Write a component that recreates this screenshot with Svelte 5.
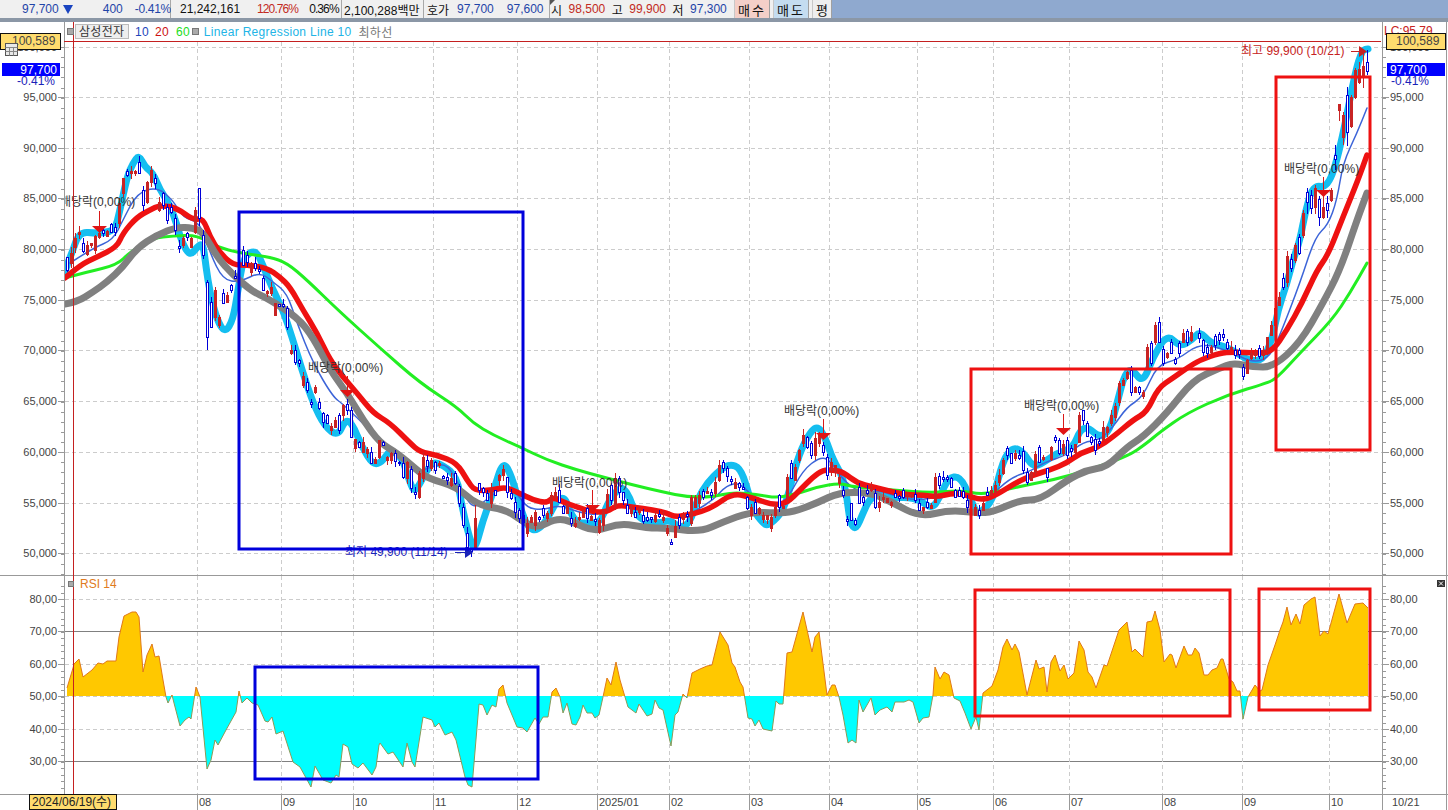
<script>
  const pts = (s) => s.trim().split(/\s+/).map((p) => p.split(',').map(Number));
  const line = (a) => a.map((p) => p.join(',')).join(' ');
  const smooth = (a) => {
    let d = `M${a[0]}`;
    for (let i = 1; i < a.length - 1; i++) {
      d += `Q${a[i]} ${(a[i][0] + a[i + 1][0]) / 2},${(a[i][1] + a[i + 1][1]) / 2}`;
    }
    return `${d}L${a[a.length - 1]}`;
  };

  // traced series, page pixel coordinates
  const cyan = pts(`65,272 67,265 73,250 77,238 83,232 93,233 103,233 115,230 120,210 127,177 133,163 139,155 145,167 153,173 160,190 170,205 177,225 182,243 190,256 197,247 203,243 206,267 210,293 217,320 225,333 233,320 238,290 243,260 250,252 257,252 264,268 273,290 283,310 292,337 302,370 313,403 325,427 338,436 345,420 352,423 362,447 373,465 382,462 390,450 402,457 410,483 415,493 427,470 433,462 443,465 457,477 462,507 470,540 475,550 483,520 493,493 503,460 512,477 520,507 528,528 537,531 547,520 557,500 565,497 570,512 577,523 587,523 600,523 608,503 615,492 623,487 630,498 635,513 645,522 660,523 670,520 680,528 690,523 697,500 707,483 720,470 730,464 740,468 747,487 753,510 763,523 768,526 780,515 787,500 797,460 807,437 817,425 825,437 833,460 842,475 847,497 850,523 856,530 863,513 870,498 883,492 893,498 907,497 920,500 932,509 940,497 948,478 960,476 970,497 977,515 983,510 993,500 1003,460 1013,447 1023,452 1033,467 1043,463 1057,453 1073,448 1080,430 1088,427 1100,438 1110,430 1117,403 1125,373 1132,369 1143,383 1153,357 1167,334 1180,347 1192,340 1200,331 1210,343 1227,347 1240,355 1250,361 1263,360 1272,340 1278,310 1287,283 1293,260 1300,240 1305,213 1313,185 1328,188 1340,150 1355,73 1362,50 1368,49`);
  const blue = pts(`70,263 93,248 113,240 123,220 137,193 157,187 173,200 183,218 200,222 210,253 223,280 240,282 260,272 273,282 287,293 297,323 313,363 333,397 343,404 383,443 400,453 417,473 430,467 447,463 460,487 473,510 490,497 503,487 517,493 527,508 543,510 560,505 580,513 600,515 620,502 640,510 663,513 683,518 697,510 713,500 727,485 740,483 753,497 773,507 787,500 803,470 820,457 830,460 843,480 860,493 880,490 900,498 920,500 937,497 957,493 973,498 990,497 1010,478 1033,470 1043,463 1067,455 1083,442 1100,440 1113,427 1127,407 1143,397 1157,365 1177,360 1200,343 1227,350 1253,363 1270,357 1280,335 1300,283 1315,237 1328,225 1337,200 1343,163 1357,133 1367,108`);
  const red = pts(`65,278 80,265 97,257 117,247 123,233 137,217 150,210 160,205 177,208 193,220 203,218 210,237 220,253 233,265 247,265 267,268 280,277 290,287 303,310 317,333 330,360 343,377 357,393 373,413 390,423 410,443 420,452 437,455 457,463 467,480 475,491 493,490 505,487 517,492 533,500 547,503 553,497 563,502 577,507 593,512 607,512 617,505 633,507 653,510 667,513 675,517 687,515 697,513 713,507 733,493 753,498 773,505 787,503 800,490 813,477 823,470 833,470 843,472 857,483 873,487 893,492 907,495 923,495 937,497 953,493 967,495 980,500 993,497 1017,482 1033,475 1050,470 1067,463 1080,453 1097,448 1113,437 1133,420 1147,412 1158,388 1173,378 1187,368 1200,360 1220,353 1233,352 1257,353 1272,352 1287,330 1302,303 1317,270 1328,255 1343,217 1358,180 1367,155`);
  const gray = pts(`65,304 77,302 93,292 107,282 123,267 137,248 157,235 177,227 193,228 203,232 217,257 233,275 253,292 267,298 297,317 313,337 330,370 347,393 363,420 380,443 397,453 417,470 427,478 457,487 477,505 507,510 523,522 537,528 557,518 573,522 595,532 620,523 647,528 667,528 700,532 723,522 750,512 777,513 793,512 817,503 840,492 873,493 893,503 920,517 950,510 977,513 993,512 1020,500 1040,500 1067,480 1087,470 1107,467 1127,447 1143,437 1167,413 1193,380 1220,368 1233,363 1253,367 1273,367 1300,343 1323,303 1340,270 1357,220 1367,193`);
  const green = pts(`65,278 87,272 117,265 130,252 153,238 173,236 197,235 217,247 240,253 270,257 287,263 307,280 340,312 380,348 420,383 457,407 473,423 493,435 520,447 547,460 577,470 603,477 633,485 663,492 687,497 713,497 733,492 760,495 777,498 800,493 817,487 840,483 853,487 893,490 933,493 960,490 983,495 1017,487 1067,477 1127,457 1147,443 1160,432 1187,413 1227,395 1267,383 1277,378 1300,353 1332,320 1350,293 1367,263`);
  const rsi = pts(`67,688 73,668 74,664 79,659 83,677 92,670 98,663 103,664 107,661 116,661 119,637 124,616 132,612 136,612 139,617 143,672 147,655 152,644 155,657 159,656 163,680 166,697 168,703 172,695 174,703 180,726 185,720 189,717 191,719 196,687 200,697 207,769 211,760 215,740 218,745 226,730 236,712 239,691 242,703 247,698 252,703 258,705 265,721 268,722 272,717 276,734 283,731 293,762 300,767 311,787 315,766 323,780 331,783 336,775 339,777 343,744 348,747 352,764 358,768 363,763 372,775 376,767 379,745 380,743 388,754 393,752 403,767 407,743 412,762 415,767 423,717 432,720 435,727 439,723 445,735 452,732 456,740 465,777 468,785 472,787 479,704 483,705 487,715 492,705 496,707 499,689 503,685 507,703 517,727 523,728 527,732 535,718 539,724 543,717 548,717 552,692 556,688 560,697 563,713 567,703 572,724 576,725 580,717 583,705 587,713 592,713 595,718 599,715 603,697 607,678 611,685 616,662 620,680 625,697 628,707 636,713 639,704 647,716 652,714 655,700 659,708 663,710 671,746 675,715 678,712 683,694 687,698 692,673 700,669 707,666 712,665 720,632 728,645 732,663 735,667 740,682 743,687 748,718 752,719 755,726 759,720 763,729 772,731 776,701 779,704 783,704 787,653 792,652 803,612 812,652 815,637 819,632 827,695 832,685 835,685 839,697 843,715 848,743 852,740 856,743 859,700 863,712 871,698 875,715 880,710 887,707 892,712 895,702 904,702 909,700 913,702 919,723 923,718 929,717 933,695 935,667 940,679 944,672 949,675 954,698 960,701 965,713 971,729 976,717 979,730 983,693 992,686 998,670 1003,647 1007,639 1012,650 1015,644 1019,652 1027,695 1036,660 1039,669 1044,667 1047,692 1051,662 1055,655 1060,671 1064,665 1068,679 1074,673 1079,641 1084,650 1088,672 1092,677 1096,688 1104,665 1107,666 1119,630 1127,622 1132,652 1135,649 1143,657 1147,622 1152,621 1155,611 1160,630 1164,662 1170,654 1172,655 1176,668 1184,646 1188,655 1192,655 1195,648 1199,653 1204,675 1208,675 1212,670 1217,668 1221,659 1223,659 1229,679 1233,682 1237,691 1240,691 1243,719 1248,697 1255,685 1260,691 1262,690 1268,665 1275,645 1280,630 1283,622 1287,607 1291,625 1296,614 1300,624 1304,605 1311,599 1315,597 1320,636 1324,631 1328,634 1339,594 1347,623 1355,604 1363,603 1368,608`);
  const rsiArea = `${line(rsi)} 1368,696 67,696`;

  // x, bodyTop, bodyBottom, wickTop, wickBottom, up
  const fixed = [
    [199, 188, 218, 188, 226, 1], [207, 282, 337, 280, 350, 1], [475, 518, 548, 505, 549, 0],
    [1303, 213, 235, 210, 238, 0], [1307, 192, 202, 188, 214, 1], [1311, 195, 208, 190, 214, 1], [1315, 188, 207, 185, 214, 0],
    [1319, 199, 217, 196, 226, 1], [1323, 207, 217, 177, 219, 0], [1327, 203, 210, 196, 218, 1], [1331, 190, 200, 188, 202, 0],
    [1335, 155, 159, 145, 170, 1], [1339, 104, 110, 104, 121, 0], [1343, 115, 137, 112, 145, 0], [1347, 95, 132, 87, 146, 1],
    [1351, 97, 126, 95, 128, 0], [1355, 70, 97, 68, 99, 0], [1359, 69, 82, 62, 84, 0], [1363, 66, 76, 50, 88, 0], [1367, 62, 71, 50, 75, 1]
  ];
  // x, bodyTop, bodyBottom, up; wicks are filled in below
  const bars = pts(`67,257,270,1 71,253,263,0 75,238,247,0 79,232,234,0 83,243,251,1 87,245,254,0 91,243,245,0 95,236,250,0 99,233,237,0 103,230,233,1 107,231,236,0 111,224,232,1 115,227,232,1 119,203,223,0 123,178,193,0 127,171,175,1 131,171,173,0 135,171,173,0 139,162,173,1 143,190,205,1 147,182,202,0 151,170,182,0 155,178,183,1 159,202,210,0 163,193,205,1 167,207,220,1 171,207,212,1 175,218,230,1 179,246,248,1 183,238,245,0 187,233,237,1 191,238,247,0 195,210,232,0 203,235,255,1 211,302,327,1 215,290,317,0 219,317,325,0 223,293,303,1 227,295,302,0 231,285,290,1 235,276,278,1 243,250,265,1 247,255,262,1 251,263,272,0 255,263,268,1 259,269,271,1 263,278,290,1 267,291,293,0 271,287,293,0 275,303,315,0 279,304,306,1 283,304,306,1 287,308,327,1 291,350,353,0 295,350,362,1 299,360,363,1 303,376,385,0 307,382,390,1 311,402,404,1 315,387,392,0 319,402,408,1 323,413,422,1 327,415,423,1 331,426,430,0 335,420,427,0 339,415,430,1 343,405,415,0 347,404,410,1 351,410,437,1 355,439,448,0 359,442,447,1 363,442,452,0 367,449,453,0 371,452,463,1 375,459,463,0 379,440,457,0 383,442,445,1 387,457,460,0 391,453,460,0 395,453,461,1 399,462,463,1 403,463,477,1 407,462,478,0 411,469,488,1 415,492,494,1 419,473,497,0 423,457,478,0 427,460,466,1 431,460,468,0 435,462,470,1 439,463,465,0 443,476,478,1 447,477,480,1 451,478,485,0 455,473,483,1 459,486,503,1 463,507,525,1 467,533,547,1 471,549,551,1 479,483,490,1 483,488,492,1 487,493,500,1 491,488,503,0 495,490,495,1 499,475,480,0 503,469,475,0 507,477,492,1 511,493,498,1 515,502,512,1 519,510,518,1 523,515,522,1 527,523,533,0 531,517,522,0 535,512,525,0 539,517,519,1 543,508,515,1 547,513,518,0 551,495,513,0 555,492,497,0 559,490,502,1 563,506,513,1 567,504,513,0 571,518,523,1 575,523,526,0 579,517,519,0 583,510,517,0 587,508,518,1 591,516,520,0 595,519,521,1 599,520,532,0 603,510,525,0 607,494,510,0 611,485,500,1 615,478,505,0 619,478,492,1 623,492,500,1 627,505,513,1 631,507,513,0 635,512,517,1 639,508,512,0 643,515,521,1 647,517,520,1 651,517,519,1 655,515,521,0 659,514,516,1 663,517,520,0 667,528,533,0 671,542,544,1 675,526,537,0 679,517,525,1 683,515,519,0 687,514,516,1 691,497,523,0 695,497,507,0 699,495,503,0 703,491,497,1 707,491,493,0 711,492,495,1 715,482,493,0 719,465,480,0 723,462,468,1 727,468,476,1 731,479,481,1 735,482,488,0 739,483,487,1 743,487,489,1 747,497,508,1 751,507,515,0 755,502,513,1 759,508,513,0 763,515,519,0 767,515,519,0 771,517,528,0 775,507,515,0 779,495,507,1 783,506,508,0 787,477,498,0 791,463,478,1 795,467,480,0 799,450,460,0 803,435,443,0 807,437,447,1 811,443,455,1 815,438,455,0 819,433,443,0 823,445,452,1 827,457,475,1 831,462,470,0 835,465,472,0 839,477,483,0 843,490,495,1 847,519,521,1 851,503,520,1 855,520,524,1 859,487,503,1 863,497,502,1 867,490,493,1 871,488,490,0 875,493,507,1 879,502,507,0 883,497,499,0 887,498,502,0 891,502,505,0 895,493,497,1 899,496,498,1 903,490,497,1 907,494,496,0 911,494,496,0 915,494,500,1 919,503,510,1 923,507,510,0 927,502,507,1 931,505,508,0 935,477,502,0 939,476,485,1 943,477,479,1 947,477,479,1 951,478,487,1 955,490,497,1 959,490,496,1 963,491,497,1 967,500,507,1 975,507,515,0 979,510,515,1 983,503,510,0 987,492,495,1 991,490,495,0 995,485,492,0 999,475,482,0 1003,460,473,0 1007,448,455,1 1011,453,463,1 1015,453,458,0 1019,455,458,1 1023,451,470,1 1027,472,482,1 1031,472,480,0 1035,454,472,0 1039,447,462,1 1043,457,459,0 1047,468,477,1 1051,447,459,0 1055,437,440,1 1059,440,453,1 1063,444,453,0 1067,440,455,1 1071,448,451,1 1075,444,452,0 1079,415,442,0 1083,410,420,1 1087,423,436,1 1091,437,442,1 1095,439,450,1 1099,441,443,1 1103,427,440,0 1107,427,432,0 1111,415,423,0 1115,406,417,0 1119,383,402,0 1123,380,385,0 1127,372,378,0 1131,370,392,1 1135,387,392,0 1139,387,392,1 1143,392,396,0 1147,347,368,0 1151,343,363,1 1155,325,342,0 1159,322,342,1 1163,349,363,1 1167,353,357,0 1171,342,353,1 1175,359,363,1 1179,343,353,1 1183,333,342,0 1187,331,342,1 1191,332,340,0 1199,333,338,1 1203,340,352,1 1207,347,353,1 1211,347,352,0 1215,336,345,1 1219,334,340,1 1223,334,337,1 1227,342,348,1 1231,347,349,0 1235,350,355,1 1239,350,354,1 1243,367,376,1 1247,360,373,0 1251,353,358,0 1255,352,355,0 1259,348,356,1 1263,350,355,0 1267,337,350,0 1271,325,335,0 1275,308,325,0 1279,297,305,0 1283,278,287,1 1287,256,282,0 1291,259,268,1 1295,245,260,0 1299,237,253,1`);

  let seed = 41;
  const rnd = () => (seed = (seed * 16807) % 2147483647) / 2147483647;
  const candles = [
    ...bars.map(([x, top, bottom, up]) => [x, top, bottom, top - Math.round(rnd() * 6), bottom + Math.round(rnd() * 6), up]),
    ...fixed
  ];

  const priceAxis = [
    [47, '100,000'], [97, '95,000'], [148, '90,000'], [198, '85,000'], [249, '80,000'], [300, '75,000'],
    [350, '70,000'], [401, '65,000'], [452, '60,000'], [503, '55,000'], [553, '50,000']
  ];
  const rsiAxis = [
    [599, '80,00', false], [631, '70,00', true], [664, '60,00', false], [696, '50,00', false], [729, '40,00', false], [761, '30,00', true]
  ];
  const months = [
    [197, '08'], [281, '09'], [353, '10'], [433, '11'], [517, '12'], [597, '2025/01'], [669, '02'],
    [749, '03'], [829, '04'], [917, '05'], [993, '06'], [1069, '07'], [1162, '08'], [1242, '09'], [1329, '10']
  ];
  const priceTicks = Array.from({ length: 53 }, (_, i) => 47 + i * 10.13);
  const rsiTicks = Array.from({ length: 32 }, (_, i) => 586 + i * 6.5);

  const dividends = [
    [60, 206, 99, 211, 226], [308, 372, 347, 376, 390], [552, 487, 592, 490, 505],
    [784, 415, 823, 419, 433], [1024, 410, 1063, 414, 428], [1284, 173, 1323, 177, 190]
  ];
  const boxes = [
    [239, 212, 284, 337, 'bx-blue'], [255, 667, 283, 112, 'bx-blue'], [971, 369, 260, 185, 'bx-red'],
    [1276, 77, 94, 373, 'bx-red'], [975, 590, 255, 126, 'bx-red'], [1259, 589, 111, 121, 'bx-red']
  ];
</script>

<div class="screen">
  <header class="quote-bar">
    <div class="group g-last">
      <span class="blue">97,700</span><i class="down"></i>
      <span class="blue chg">400</span><span class="blue rate">-0.41%</span>
    </div>
    <div class="group g-vol">
      <span>21,242,161</span><span class="red pct">120.76%</span><span class="pct">0.36%</span>
    </div>
    <div class="group g-amt"><span>2,100,288백만</span></div>
    <div class="group g-ask">
      <span>호가</span><span class="blue">97,700</span><span class="blue">97,600</span>
    </div>
    <div class="group g-ohl">
      <i class="corner"></i>
      <span>시</span><span class="red">98,500</span><span>고</span><span class="red">99,900</span><span>저</span><span class="blue">97,300</span>
    </div>
    <div class="actions">
      <button class="btn buy">매수</button>
      <button class="btn sell">매도</button>
      <button class="btn flat">평</button>
    </div>
  </header>

  <main class="chart">
    <div class="legend">
      <i class="sq"></i>
      <span class="stock">삼성전자</span>
      <span class="m10">10</span><span class="m20">20</span><span class="m60">60</span>
      <i class="sq"></i>
      <span class="lrl">Linear Regression Line 10</span>
      <span class="low">최하선</span>
    </div>

    <svg class="plot" viewBox="0 22 1448 788" width="1448" height="788">
      <defs>
        <clipPath id="pane"><rect x="65" y="22" width="1317" height="553" /></clipPath>
        <clipPath id="over50"><rect x="65" y="576" width="1317" height="120" /></clipPath>
        <clipPath id="under50"><rect x="65" y="696" width="1317" height="98" /></clipPath>
      </defs>

      <!-- grid -->
      {#each priceAxis as [y]}
        <line class="grid" x1="65" x2="1382" y1={y + 0.5} y2={y + 0.5} />
      {/each}
      {#each rsiAxis as [y, , solid]}
        <line class={solid ? 'level' : 'grid'} x1="65" x2="1382" y1={y + 0.5} y2={y + 0.5} />
      {/each}
      {#each months as [x]}
        <line class="grid" x1={x + 0.5} x2={x + 0.5} y1="42" y2="575" />
        <line class="grid" x1={x + 0.5} x2={x + 0.5} y1="576" y2="794" />
        <line class="axis" x1={x + 0.5} x2={x + 0.5} y1="794" y2="810" />
      {/each}

      <!-- frame -->
      <line class="axis" x1="0" x2="1448" y1="575.5" y2="575.5" />
      <line class="axis" x1="0" x2="1448" y1="794.5" y2="794.5" />
      <line class="axis" x1="64.5" x2="64.5" y1="22" y2="794" />
      <line class="axis" x1="1382.5" x2="1382.5" y1="22" y2="810" />
      <line class="axis" x1="1446.5" x2="1446.5" y1="22" y2="810" />

      {#each priceTicks as y}
        <line class="axis" x1="61" x2="64" y1={Math.round(y) + 0.5} y2={Math.round(y) + 0.5} />
        <line class="axis" x1="1383" x2="1386" y1={Math.round(y) + 0.5} y2={Math.round(y) + 0.5} />
      {/each}
      {#each rsiTicks as y}
        <line class="axis" x1="61" x2="64" y1={Math.round(y) + 0.5} y2={Math.round(y) + 0.5} />
        <line class="axis" x1="1383" x2="1386" y1={Math.round(y) + 0.5} y2={Math.round(y) + 0.5} />
      {/each}

      <!-- axis labels -->
      {#each [...priceAxis, ...rsiAxis] as [y, label]}
        <line class="axis" x1="58" x2="64" y1={y + 0.5} y2={y + 0.5} />
        <line class="axis" x1="1383" x2="1389" y1={y + 0.5} y2={y + 0.5} />
        <text class="tick" x="57" y={y + 4} text-anchor="end">{label}</text>
        <text class="tick" x="1390" y={y + 4}>{label}</text>
      {/each}

      <!-- price pane -->
      <g clip-path="url(#pane)">
        <path class="ln ln-cyan" d={smooth(cyan)} />
        <path class="ln ln-blue" d={smooth(blue)} />
        <path class="ln ln-green" d={smooth(green)} />
        <path class="ln ln-red" d={smooth(red)} />
        <path class="ln ln-gray" d={smooth(gray)} />

        <g class="candles">
          {#each candles as [x, top, bottom, wickTop, wickBottom, up]}
            <line class={up ? 'wick-up' : 'wick-down'} x1={x + 0.5} x2={x + 0.5} y1={wickTop} y2={wickBottom} />
            {#if up}
              <rect class="body-up" x={x - 1 + 0.5} y={top + 0.5} width="2" height={bottom - top} />
            {:else}
              <rect class="body-down" x={x - 1} y={top} width="3" height={bottom - top + 1} />
            {/if}
          {/each}
        </g>

        {#each dividends as [tx, ty, ax, y1, y2]}
          <line class="mark" x1={ax + 0.5} x2={ax + 0.5} y1={y1} y2={y2} />
          <polygon class="mark-head" points="{ax - 7},{y2} {ax + 8},{y2} {ax + 0.5},{y2 + 7}" />
          <text class="note" x={tx} y={ty}>배당락(0,00%)</text>
        {/each}

        <text class="hi" x="1241" y="55">최고 99,900 (10/21)</text>
        <line class="hi-line" x1="1351" x2="1360" y1="51.5" y2="51.5" />
        <polygon class="hi-head" points="1359,46 1367,51.5 1359,57" />

        <text class="lo" x="345" y="556">최저 49,900 (11/14)</text>
        <line class="lo-line" x1="455" x2="466" y1="552.5" y2="552.5" />
        <polygon class="lo-head" points="465,547 473,552.5 465,558" />
      </g>

      <!-- rsi pane -->
      <polygon class="fill-up" points={rsiArea} clip-path="url(#over50)" />
      <polygon class="fill-down" points={rsiArea} clip-path="url(#under50)" />
      <polyline class="rsi-up" points={line(rsi)} clip-path="url(#over50)" />
      <polyline class="rsi-down" points={line(rsi)} clip-path="url(#under50)" />

      <!-- price cursor -->
      <line class="cursor" x1="73.5" x2="73.5" y1="22" y2="794" />
      <line class="cursor" x1="64" x2="1381" y1="41.5" y2="41.5" />

      <!-- drawn boxes -->
      {#each boxes as [x, y, w, h, cls]}
        <rect class={cls} {x} {y} width={w} height={h} />
      {/each}

      <text class="rsi-label" x="80" y="588">RSI 14</text>
      <rect class="sq-svg" x="68.5" y="581.5" width="5" height="5" />
      <rect class="close-box" x="1437" y="580" width="8" height="7" />
      <path class="close-x" d="M1439 581.5l4 4m0-4l-4 4" />

      <!-- left tags -->
      <rect class="tag" x="0.5" y="33.5" width="60" height="16" />
      <text class="tag-txt" x="12" y="45">100,589</text>
      <g class="tbl">
        <rect x="5.5" y="43.5" width="12" height="12" />
        <path d="M5.5 47.5h12M5.5 51.5h12M9.5 47.5v8M13.5 47.5v8" />
      </g>
      <rect class="last" x="2" y="63" width="58" height="13" />
      <text class="last-txt" x="57" y="74" text-anchor="end">97,700</text>
      <text class="last-pct" x="55" y="85" text-anchor="end">-0.41%</text>

      <!-- right tags -->
      <text class="lc" x="1384" y="35">LC:95,79</text>
      <rect class="tag" x="1386.5" y="33.5" width="59" height="16" />
      <text class="tag-txt" x="1396" y="45">100,589</text>
      <rect class="last" x="1387" y="63" width="58" height="13" />
      <text class="last-txt" x="1390" y="74">97,700</text>
      <text class="last-pct" x="1391" y="85">-0.41%</text>

      <!-- time axis -->
      {#each months as [x, label]}
        <text class="tick" x={x + 2} y="806">{label}</text>
      {/each}
      <text class="tick" x="1392" y="806">10/21</text>
      <rect class="tag" x="29.5" y="794.5" width="87" height="15" />
      <text class="date" x="32" y="806">2024/06/19(수)</text>
    </svg>
  </main>
</div>

<style>
  :global(body) {
    margin: 0;
    background: #fff;
    font-family: "Liberation Sans", "Noto Sans CJK KR", sans-serif;
  }

  .screen { width: 1448px; height: 810px; overflow: hidden; display: flex; flex-direction: column; }

  .quote-bar {
    display: flex;
    height: 18px;
    background: #8fa9cf;
    border-bottom: 4px solid #8b97a6;
    font-size: 12px;
    color: #111;
    flex-shrink: 0;
  }
  .group {
    display: flex;
    align-items: center;
    height: 18px;
    background: #f0f0f0;
    border-right: 1px solid #a8a8a8;
    position: relative;
    box-sizing: border-box;
  }
  .g-last { width: 171px; padding-left: 22px; }
  .down {
    margin-left: 4px;
    border-left: 5px solid transparent;
    border-right: 5px solid transparent;
    border-top: 9px solid #1a44c0;
  }
  .chg { margin-left: 30px; }
  .rate { margin-left: 12px; letter-spacing: -0.3px; }
  .g-vol { width: 171px; padding-left: 9px; }
  .pct { letter-spacing: -0.9px; }
  .g-vol span:nth-child(2) { margin-left: 17px; }
  .g-vol span:nth-child(3) { margin-left: 11px; }
  .g-amt { width: 82px; padding-left: 2px; }
  .g-ask { width: 126px; padding-left: 3px; }
  .g-ask span:nth-child(2) { margin-left: 8px; }
  .g-ask span:nth-child(3) { margin-left: 13px; }
  .g-ohl { width: 184px; padding-left: 1px; border-right: 0; }
  .g-ohl span { margin-right: 6.5px; }
  .corner {
    position: absolute;
    left: 0;
    top: 0;
    border-top: 5px solid #555;
    border-right: 5px solid transparent;
  }
  .blue { color: #1f45a8; }
  .red { color: #c22a22; }

  .actions { display: flex; gap: 3px; height: 18px; background: #f0f0f0; }
  .btn {
    margin: 0;
    padding: 0;
    width: 36px;
    height: 18px;
    border: 0;
    border-left: 1px solid #c8c8c8;
    border-right: 1px solid #a0a0a0;
    font: inherit;
    font-size: 13px;
    color: #111;
    letter-spacing: 2px;
  }
  .buy { background: #f4cfc8; }
  .sell { background: #c4dcf0; }
  .flat { width: 20px; background: #eee; letter-spacing: 0; }

  .chart { position: relative; flex: 1; }
  .plot { display: block; }

  .legend {
    position: absolute;
    left: 67px;
    top: 2px;
    display: flex;
    align-items: center;
    height: 15px;
    font-size: 12px;
    letter-spacing: 0.3px;
    z-index: 1;
  }
  .sq { width: 5px; height: 5px; background: #aaa; border: 1px solid #777; }
  .stock {
    margin-left: 1px;
    padding: 0 3px;
    height: 15px;
    line-height: 14px;
    background: #eee;
    border: 1px solid #bbb;
    box-sizing: border-box;
    color: #333;
    width: 54px;
    white-space: nowrap;
  }
  .m10 { color: #2244bb; margin: 0 6px 0 6px; }
  .m20 { color: #cc1111; margin-right: 7px; }
  .m60 { color: #22dd22; margin-right: 2px; }
  .lrl { color: #22b4e6; margin-left: 5px; }
  .low { color: #777; margin-left: 7px; }

  .grid { stroke: #ccc; stroke-width: 1; stroke-dasharray: 4 3; }
  .level { stroke: #808080; stroke-width: 1; }
  .axis { stroke: #999; stroke-width: 1; }
  .cursor { stroke: #c42020; stroke-width: 1; }

  .tick { font-size: 11px; fill: #444; }

  .ln { fill: none; stroke-linejoin: round; stroke-linecap: round; }
  .ln-cyan { stroke: #14bef0; stroke-width: 7; }
  .ln-blue { stroke: #3c64d8; stroke-width: 1.5; }
  .ln-green { stroke: #22ee22; stroke-width: 3; }
  .ln-red { stroke: #ee1111; stroke-width: 5.5; }
  .ln-gray { stroke: #808080; stroke-width: 7; }

  .candles { shape-rendering: crispEdges; }
  .wick-up { stroke: #0000d8; }
  .wick-down { stroke: #c82424; }
  .body-up { fill: #fff; stroke: #0000d8; }
  .body-down { fill: #c82424; }

  .mark { stroke: #d81818; }
  .mark-head { fill: #e01414; }
  .note { font-size: 12px; fill: #333; }
  .hi { font-size: 12px; fill: #c62222; }
  .hi-line { stroke: #c62222; }
  .hi-head { fill: #c62222; }
  .lo { font-size: 12px; fill: #1a22b8; }
  .lo-line { stroke: #1a22b8; }
  .lo-head { fill: #1a22b8; }

  .fill-up { fill: #ffc800; }
  .fill-down { fill: #00ffff; }
  .rsi-up { fill: none; stroke: #e07818; stroke-width: 1; }
  .rsi-down { fill: none; stroke: #8c9a58; stroke-width: 1; }

  .bx-blue { fill: none; stroke: #0000dc; stroke-width: 3; }
  .bx-red { fill: none; stroke: #ee1111; stroke-width: 3; }

  .rsi-label { font-size: 12px; fill: #e07b20; }
  .sq-svg { fill: #aaa; stroke: #777; }
  .close-box { fill: #333; }
  .close-x { stroke: #fff; fill: none; }

  .tag { fill: #ffdc6e; stroke: #111; }
  .tag-txt { font-size: 12px; fill: #444; }
  .tbl rect { fill: #e8e8e8; stroke: #555; }
  .tbl path { stroke: #888; fill: none; }
  .last { fill: #0000ff; }
  .last-txt { font-size: 12px; fill: #fff; }
  .last-pct { font-size: 12px; fill: #1a22b8; }
  .lc { font-size: 12px; fill: #c62222; }
  .date { font-size: 12px; fill: #222; }
</style>
